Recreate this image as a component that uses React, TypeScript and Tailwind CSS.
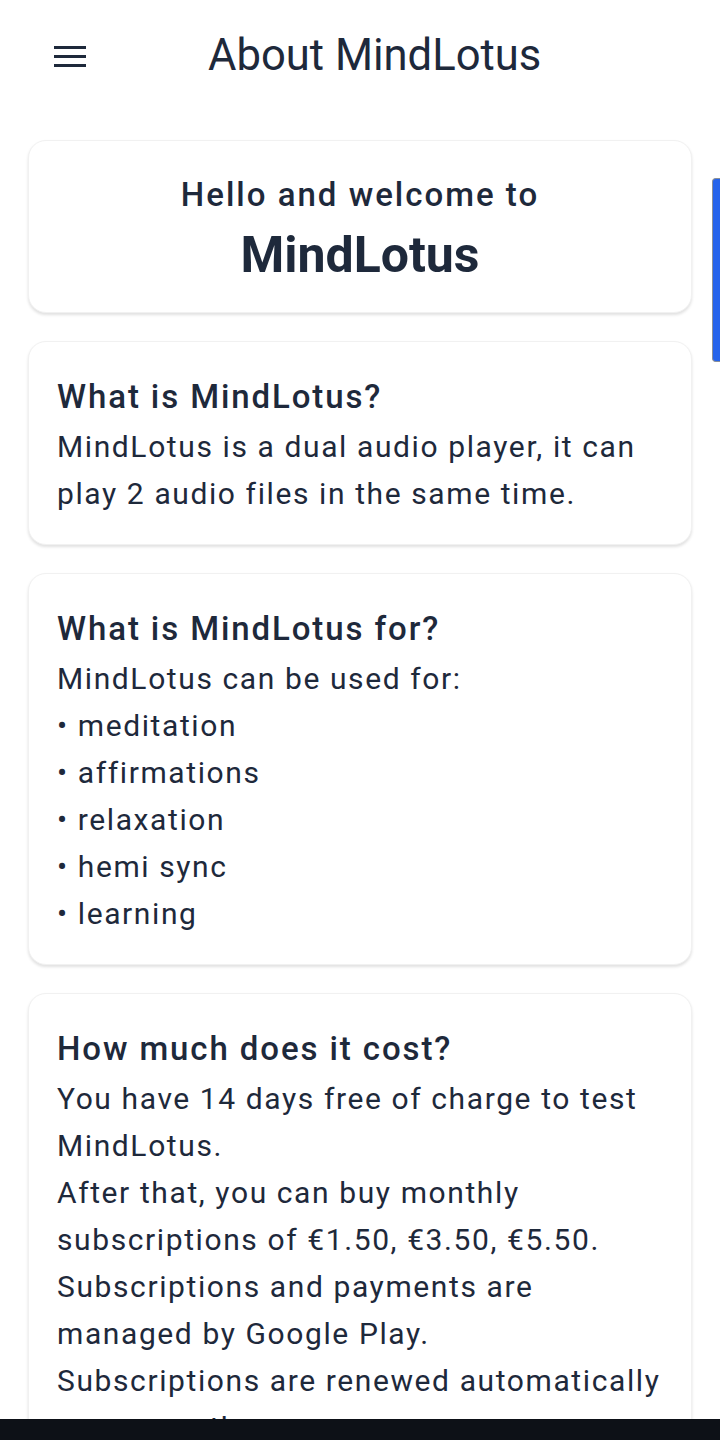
import React from "react";

const forItems = ["meditation", "affirmations", "relaxation", "hemi sync", "learning"];

function Card({ children, className = "" }: { children: React.ReactNode; className?: string }) {
  return (
    <div
      className={`bg-white rounded-[18px] border border-[#f1f1f1] shadow-[0_2px_3px_rgba(0,0,0,0.12)] ${className}`}
    >
      {children}
    </div>
  );
}

function Section({ title, children }: { title: string; children: React.ReactNode }) {
  return (
    <Card className="px-[28px] pt-[31px] pb-[27px] whitespace-nowrap">
      <h2 className="text-[33px] leading-[47px] font-medium tracking-[1.9px]">{title}</h2>
      <div className="mt-[3px] text-[30px] leading-[47px] tracking-[1.6px]">{children}</div>
    </Card>
  );
}

export default function App() {
  return (
    <div className="relative w-[720px] h-[1440px] overflow-hidden bg-white text-[#1e293b] font-['Roboto',_'Noto_Sans',_sans-serif]">
      {/* Header */}
      <header className="pt-[30px] flex items-center">
        <button className="ml-[54px] w-[32px] flex flex-col gap-[6px]" aria-label="Menu">
          <span className="block h-[3px] bg-[#1e293b]"></span>
          <span className="block h-[3px] bg-[#1e293b]"></span>
          <span className="block h-[3px] bg-[#1e293b]"></span>
        </button>
        <h1 className="ml-[122px] text-[43.6px] leading-[52px] font-normal">About MindLotus</h1>
      </header>

      {/* Content */}
      <main className="mt-[58px] px-[28px] flex flex-col gap-[28px]">
        <Card className="pt-[34px] pb-[28px] text-center">
          <p className="text-[33px] leading-[40px] font-medium tracking-[2px]">Hello and welcome to</p>
          <p className="mt-[11px] text-[50px] leading-[58px] font-bold">MindLotus</p>
        </Card>

        <Section title="What is MindLotus?">
          <p>
            MindLotus is a dual audio player, it can
            <br />
            play 2 audio files in the same time.
          </p>
        </Section>

        <Section title="What is MindLotus for?">
          <p>MindLotus can be used for:</p>
          {forItems.map((item) => (
            <p key={item}>• {item}</p>
          ))}
        </Section>

        <Section title="How much does it cost?">
          <p>
            You have 14 days free of charge to test
            <br />
            MindLotus.
          </p>
          <p>
            After that, you can buy monthly
            <br />
            subscriptions of €1.50, €3.50, €5.50.
          </p>
          <p>
            Subscriptions and payments are
            <br />
            managed by Google Play.
          </p>
          <p>
            Subscriptions are renewed automatically
            <br />
            every month.
          </p>
        </Section>
      </main>

      {/* Scrollbar */}
      <div className="absolute right-0 top-[178px] w-[8px] h-[184px] bg-[#2563eb] rounded-l-[4px] border-l border-y border-[#8a8f99]"></div>

      {/* System nav bar */}
      <div className="absolute bottom-0 left-0 right-0 h-[21px] bg-[#0d1117]"></div>
    </div>
  );
}
